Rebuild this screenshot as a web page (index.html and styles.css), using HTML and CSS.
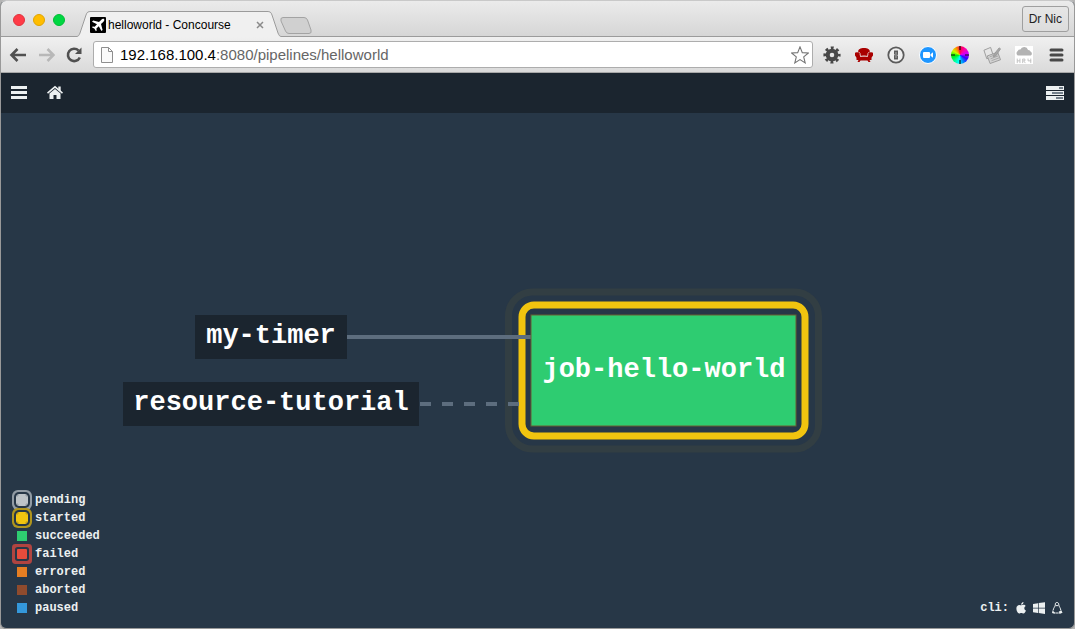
FILE: index.html
```html
<!DOCTYPE html>
<html lang="en">
<head>
<meta charset="utf-8">
<title>helloworld - Concourse</title>
<link rel="stylesheet" href="styles.css">
</head>
<body>
<div class="window">
  <header class="titlebar">
    <div class="lights">
      <button class="light light-close" aria-label="Close window"></button>
      <button class="light light-minimize" aria-label="Minimize window"></button>
      <button class="light light-zoom" aria-label="Zoom window"></button>
    </div>
    <div class="tab">
      <svg class="tab-edge" viewBox="0 0 13 26" aria-hidden="true"><path d="M-1 25.500C2 25.500 2 24 3 22L9 4C10 1 11 .5 14 .5V27H-1Z" fill="#f0f0f0"/><path d="M-1 25.500C2 25.500 2 24 3 22L9 4C10 1 11 .5 14 .5" fill="none" stroke="#9b9b9b"/></svg>
      <div class="tab-body">
        <svg class="favicon" viewBox="0 0 16 16" aria-hidden="true"><rect width="16" height="16" rx="1" fill="#000"/><path d="M14 2c.8.8.2 2-.8 3L11 7.100l1.600 5.900-1.200 1.100L8.800 9.200 6.400 11.500l.3 2-.8.8-1.400-2.600L1.900 10.200l.8-.8 2 .3L7 7.300 2 4.700l1.200-1.200L9 5.100 11.100 2.900C12 1.900 13.200 1.300 14 2Z" fill="#fff"/></svg>
        <span class="tab-title">helloworld - Concourse</span>
        <button class="tab-close" aria-label="Close tab"><svg viewBox="0 0 8 8"><path d="M1 1l6 6M7 1L1 7" stroke="#8a8a8a" stroke-width="1.500"/></svg></button>
      </div>
      <svg class="tab-edge tab-edge-right" viewBox="0 0 13 26" aria-hidden="true"><path d="M-1 25.500C2 25.500 2 24 3 22L9 4C10 1 11 .5 14 .5V27H-1Z" fill="#f0f0f0"/><path d="M-1 25.500C2 25.500 2 24 3 22L9 4C10 1 11 .5 14 .5" fill="none" stroke="#9b9b9b"/></svg>
    </div>
    <button class="new-tab" aria-label="New tab"><svg viewBox="0 0 32 17"><path d="M3 .5H24Q26.500 .5 27.500 3L31 13Q32 16.500 29 16.500H9Q6.500 16.500 5.500 14L1 4Q0 .5 3 .5Z" fill="#d0d0d0" stroke="#a3a3a3"/></svg></button>
    <button class="profile">Dr Nic</button>
  </header>

  <nav class="toolbar">
    <div class="nav-buttons">
      <button class="tool" aria-label="Back"><svg viewBox="0 0 18 18"><path d="M17 9H4M8.500 3L2.500 9l6 6" fill="none" stroke="#505050" stroke-width="2.600"/></svg></button>
      <button class="tool" aria-label="Forward"><svg viewBox="0 0 18 18"><path d="M2 9h13M10.500 3l6 6-6 6" fill="none" stroke="#b8b8b8" stroke-width="2.600"/></svg></button>
      <button class="tool" aria-label="Reload"><svg viewBox="0 0 18 18"><path d="M14.800 11.500A6.200 6.200 0 1 1 13.600 4.600" fill="none" stroke="#505050" stroke-width="2.600"/><path d="M16.500 1.500V8H10Z" fill="#505050"/></svg></button>
    </div>
    <div class="address">
      <svg class="page-icon" viewBox="0 0 12 16" aria-hidden="true"><path d="M.5 .5H7.500L11.500 4.500V15.500H.5ZM7.500 .5V4.500H11.500" fill="#fafafa" stroke="#8e8e8e"/></svg>
      <div class="url-field">
        <input class="url-input" aria-label="Address" value="192.168.100.4:8080/pipelines/helloworld">
        <div class="url-display" aria-hidden="true"><span class="url-host">192.168.100.4</span>:8080/pipelines/helloworld</div>
      </div>
      <button class="star" aria-label="Bookmark"><svg viewBox="0 0 18 18"><path d="M9 .9l2.300 5.700 6.100.4-4.700 3.900 1.500 6L9 13.600 3.800 16.900l1.500-6L.6 7l6.100-.4Z" fill="#fff" stroke="#757575" stroke-width="1.100"/></svg></button>
    </div>
    <div class="extensions">
      <button class="tool" aria-label="Settings extension"><svg viewBox="0 0 18 18"><g fill="none" stroke="#484848"><circle cx="9" cy="9" r="4.300" stroke-width="4"/><circle cx="9" cy="9" r="7" stroke-width="3.200" stroke-dasharray="2.800 2.698" stroke-dashoffset="1.400"/></g></svg></button>
      <button class="tool" aria-label="Couch extension"><svg viewBox="1 1 18 16"><path d="M4 6.500C4 3 6.500 2 10 2s6 1 6 4.500L14 9v1.500H6V9Z" fill="#a90000"/><path d="M.5 8C.8 5.500 4.500 5.500 5.500 8l1 3h7l1-3c1-2.500 4.700-2.500 5 0 .2 1.800-2 2.500-2 4.500V14h-2l1 2h-2l-1-1.500h-7L5.500 16h-2l1-2h-2v-1.500c0-2-2.200-2.700-2-4.500Z" fill="#a90000"/><path d="M4.500 6C6 6.400 6.300 7.500 6.500 10.500c2-.8 5-.8 7 0 .2-3 .5-4.100 2-4.500" fill="none" stroke="#ebdede" stroke-width=".8"/></svg></button>
      <button class="tool" aria-label="Password extension"><svg viewBox="0 0 18 18"><circle cx="9" cy="9" r="7.700" fill="#eee" stroke="#5b5b5b" stroke-width="1.800"/><path d="M7 4.500h4v4l-.8.700.8.800v3.500H7v-4l.8-.7-.8-.8Z" fill="#5b5b5b"/><path d="M9 6v6" stroke="#ddd" stroke-width=".6"/></svg></button>
      <button class="tool" aria-label="Video extension"><svg viewBox="0 0 18 18"><circle cx="9" cy="9" r="8.500" fill="#1e96ff" stroke="#fff"/><rect x="4" y="6" width="7" height="6" rx="1" fill="#fff"/><path d="M11.500 8.200L14 6.300v5.400l-2.500-1.900Z" fill="#fff"/></svg></button>
      <button class="tool" aria-label="Colour extension"><span class="wheel"><svg viewBox="0 0 18 18"><path d="M9 0v4M9 14v4M0 9h4M14 9h4" stroke="#111" stroke-width="1.200"/></svg></span></button>
      <button class="tool" aria-label="Notes extension"><svg viewBox="0 0 19 18"><g stroke="#9a9a9a" fill="#e6e6e6"><path d="M1 4l7-3 3 9-7 3Z"/><path d="M4.500 10l11-4 3 8-11 4Z" fill="#d2d2d2"/><path d="M7 11l8-3M8 13l8-3M9 15l8-3" stroke-width=".8"/><path d="M11.500 8.500L17 1.500l1.500 1-5 7.500-2.500 1Z" fill="#a6a6a6"/></g></svg></button>
      <button class="tool" aria-label="HR4 extension"><svg viewBox="0 0 20 20"><path d="M0 0h20v20H0Z" fill="#fff"/><path d="M3 10.500A3 3 0 0 1 3 5.500 3 3 0 0 1 6 4 4.500 4.500 0 0 1 14.500 4.500 3 3 0 0 1 17.500 6.500 2.200 2.200 0 0 1 17.500 10.500Z" fill="#b3b3b3"/><path d="M2.500 14v5M5.500 14v5M2.500 16.500h3M8.500 19v-4.500h2.500v2h-2M10 17l1.500 2M14.500 14v2.500H18M17.500 14v5" fill="none" stroke="#bdbdbd"/></svg></button>
      <button class="tool" aria-label="Browser menu"><svg viewBox="0 0 18 18"><path d="M4 4h11M4 9h11M4 14h11" stroke="#484848" stroke-width="3" stroke-linecap="round"/></svg></button>
    </div>
  </nav>

  <div class="appbar">
    <div class="appbar-left">
      <button class="app-icon" aria-label="Pipelines"><svg viewBox="0 0 16 16"><path d="M0 2.500h16M0 7.500h16M0 12.500h16" stroke="#ecf0f1" stroke-width="3"/></svg></button>
      <a class="app-icon" href="#home" aria-label="Home"><svg viewBox="0 0 16 16"><path d="M8 4L2.500 8.500V14H6.500v-4h3v4h4V8.500Z" fill="#ecf0f1"/><path d="M.5 8.200L8 1.900l7.500 6.300" fill="none" stroke="#ecf0f1" stroke-width="1.600"/><path d="M11.300 1.500h2.400v5.500l-2.400-2Z" fill="#ecf0f1"/></svg></a>
    </div>
    <a class="app-icon builds" href="#builds" aria-label="Builds"><svg viewBox="0 0 18 14"><path d="M0 0h18v4H0ZM0 5h18v4H0ZM0 10h18v4H0Z" fill="#ecf0f1"/><path d="M13 2h4M6 7h11M10 12h7" stroke="#4c5b69" stroke-width="1.500"/></svg></a>
  </div>

  <main class="pipeline">
    <svg class="graph" viewBox="1 113 1073 515" role="img" aria-label="Pipeline graph">
      <rect class="pulse" x="508.500" y="292" width="310" height="157" rx="24"/>
      <rect class="ring" x="522" y="305" width="283" height="131" rx="12"/>
      <path class="edge" d="M347 337H531"/>
      <path class="edge edge-dashed" d="M420 404H520"/>
      <a href="#my-timer"><rect class="resource" x="195" y="315" width="152" height="44"/><text class="label" x="271" y="343">my-timer</text></a>
      <a href="#resource-tutorial"><rect class="resource" x="123" y="382" width="296" height="44"/><text class="label" x="271" y="410">resource-tutorial</text></a>
      <a href="#job-hello-world"><rect class="job" x="531" y="315" width="265" height="111"/><text class="label" x="664" y="377">job-hello-world</text></a>
    </svg>
    <ul class="legend">
      <li><span class="swatch pending"></span>pending</li>
      <li><span class="swatch started"></span>started</li>
      <li><span class="swatch succeeded"></span>succeeded</li>
      <li><span class="swatch failed"></span>failed</li>
      <li><span class="swatch errored"></span>errored</li>
      <li><span class="swatch aborted"></span>aborted</li>
      <li><span class="swatch paused"></span>paused</li>
    </ul>
    <div class="cli">
      <span>cli:</span>
      <a href="#macos" aria-label="macOS"><svg viewBox="0 0 12 12"><path d="M8.500 0C8.600 1.500 7.500 2.700 6.100 2.700 6 1.400 7.200.2 8.500 0ZM6.200 3.300c.6 0 1.300-.5 2.300-.5 1 0 1.700.5 2.200 1.200-2 1.200-1.700 3.700.3 4.500-.5 1.400-1.500 3-2.500 3-.8 0-1.200-.5-2.200-.5s-1.400.5-2.100.5C2.800 11.500 1.400 9 1.400 6.600c0-2.300 1.400-3.700 3-3.700.8 0 1.300.4 1.800.4Z" fill="#ecf0f1"/></svg></a>
      <a href="#windows" aria-label="Windows"><svg viewBox="0 0 12 12"><path d="M0 1.900l5-.7v4.500H0ZM5.700 1.100L12 .2v5.500H5.700ZM0 6.400h5v4.500l-5-.7ZM5.700 6.400H12v5.500l-6.300-.9Z" fill="#ecf0f1"/></svg></a>
      <a href="#linux" aria-label="Linux"><svg viewBox="0 0 12 12"><path d="M4.300 3C4.200 1 4.700.5 6 .5s1.800.8 1.800 2.500c0 1.500 2 3 2 5.500M4.300 3c0 1.500-2 3-2.200 5.500" fill="none" stroke="#ecf0f1"/><path d="M4.500 3h3L6 4.500ZM1.500 8.500L4.500 11l-1 .8-2.500-.7ZM10.500 8.500l1 2.200L8.500 12 7.800 9.500ZM4.500 10.500h3.200v.9H4.500Z" fill="#ecf0f1"/></svg></a>
    </div>
  </main>
</div>
</body>
</html>
```
FILE: styles.css
```css
* { box-sizing: border-box; }

body {
  margin: 0;
  background: #b5b5b5;
  font-family: "Liberation Sans", Arial, sans-serif;
}

button {
  margin: 0;
  padding: 0;
  border: 0;
  background: none;
  font: inherit;
}

svg { display: block; }

.window {
  display: flex;
  flex-direction: column;
  min-height: 100vh;
  border: 1px solid #999;
  border-top-color: #c9c9c9;
  border-radius: 6px;
  overflow: hidden;
  background: #273747;
}

/* Title bar */
.titlebar {
  display: flex;
  align-items: flex-end;
  height: 36px;
  padding-right: 5px;
  border-bottom: 1px solid #9b9b9b;
  background: linear-gradient(#ebebeb, #d6d6d6);
}

.lights {
  display: flex;
  gap: 8px;
  padding: 0 12px 10px 12px;
}

.light {
  width: 12px;
  height: 12px;
  border: 1px solid #e0333d;
  border-radius: 50%;
  background: #ff3b47;
}
.light-minimize { border-color: #e0a400; background: #ffbd00; }
.light-zoom { border-color: #00bd35; background: #00d742; }

.tab {
  display: flex;
  margin-bottom: -1px;
}
.tab-edge { width: 13px; height: 26px; }
.tab-edge-right { transform: scaleX(-1); }
.tab-body {
  display: flex;
  align-items: center;
  width: 178px;
  height: 26px;
  padding-right: 4px;
  border-top: 1px solid #9b9b9b;
  background: #f0f0f0;
}
.favicon { width: 16px; height: 16px; margin-right: 2px; }
.tab-title {
  flex: 1;
  color: #000;
  font-size: 12px;
  line-height: 16px;
  white-space: nowrap;
}
.tab-close svg { width: 8px; height: 8px; }

.new-tab { margin: 0 0 2px -1px; }
.new-tab svg { width: 32px; height: 17px; }

.profile {
  align-self: center;
  height: 26px;
  margin-left: auto;
  padding: 0 6px;
  border: 1px solid #9f9f9f;
  border-radius: 3px;
  background: linear-gradient(#e6e6e6, #dcdcdc);
  color: #222;
  font-size: 12px;
}

/* Toolbar */
.toolbar {
  display: flex;
  align-items: center;
  height: 36px;
  padding: 0 9px 0 8px;
  border-bottom: 1px solid #a8a8a8;
  background: linear-gradient(#f0f0f0, #dadada);
}
.nav-buttons { display: flex; gap: 10px; }
.tool svg { width: 18px; height: 18px; }

.address {
  display: flex;
  flex: 1;
  align-items: center;
  height: 27px;
  margin: 0 10px;
  padding: 0 3px 0 7px;
  border: 1px solid #adadad;
  border-radius: 3px;
  background: #fff;
}
.page-icon { width: 12px; height: 16px; margin-right: 7px; }
.url-field {
  display: grid;
  flex: 1;
  align-items: center;
}
.url-input,
.url-display {
  grid-area: 1 / 1;
  min-width: 0;
  padding: 0;
  border: 0;
  background: none;
  font: 15px/20px "Liberation Sans", Arial, sans-serif;
}
.url-input { color: transparent; outline: 0; }
.url-display { color: #666; pointer-events: none; }
.url-host { color: #000; }
.star svg { width: 18px; height: 18px; }

.extensions { display: flex; gap: 14px; }
.wheel {
  display: block;
  border-radius: 50%;
  background: conic-gradient(#f04, #f0a 40deg, #c0f 80deg, #30f 120deg, #08f 155deg, #0ff 190deg, #0f8 225deg, #0e0 265deg, #cf0 300deg, #f80 335deg, #f04);
}

/* Application */
.appbar {
  display: flex;
  align-items: center;
  justify-content: space-between;
  height: 40px;
  padding: 0 10px 1px;
  background: #1b252f;
}
.appbar-left { display: flex; gap: 20px; }
.app-icon svg { width: 16px; height: 16px; }
.builds svg { width: 18px; height: 14px; }

.pipeline {
  position: relative;
  display: flex;
  flex: 1;
  align-items: flex-end;
  justify-content: space-between;
  padding: 0 11px 11px;
  color: #ecf0f1;
  font: bold 12px/18px "Liberation Mono", "Courier New", monospace;
}
.graph {
  position: absolute;
  inset: 0;
  width: 100%;
  height: 100%;
}
.pulse { fill: none; stroke: #323e43; stroke-width: 7; }
.ring { fill: #273747; stroke: #f1c40f; stroke-width: 7; }
.edge { fill: none; stroke: #5d6d7e; stroke-width: 4; }
.edge-dashed { stroke-dasharray: 11 11; }
.resource { fill: #1b252f; }
.job { fill: #2ecc71; stroke: #695f32; stroke-width: 1; }
.label {
  fill: #fff;
  font-size: 27px;
  text-anchor: middle;
}

.legend {
  position: relative;
  margin: 0;
  padding: 0;
  list-style: none;
}
.legend li {
  display: flex;
  align-items: center;
  gap: 8px;
  padding-left: 5px;
}
.swatch { width: 10px; height: 10px; }
.pending { background: #bdc3c7; outline: 1px solid #bdc3c7; box-shadow: 0 0 0 3px #273747, 0 0 0 5px #919ba4; border-radius: 2px; }
.started { background: #f1c40f; outline: 1px solid #f1c40f; box-shadow: 0 0 0 3px #273747, 0 0 0 5px #b0951d; border-radius: 2px; }
.succeeded { background: #2ecc71; }
.failed { background: #e74c3c; box-shadow: 0 0 0 2px #273747, 0 0 0 5px #b04440; border-radius: 1px; }
.errored { background: #e67e22; }
.aborted { background: #8f4b2d; }
.paused { background: #3498db; }

.cli {
  position: relative;
  display: flex;
  align-items: center;
  gap: 6px;
}
.cli svg { width: 12px; height: 12px; }
```
